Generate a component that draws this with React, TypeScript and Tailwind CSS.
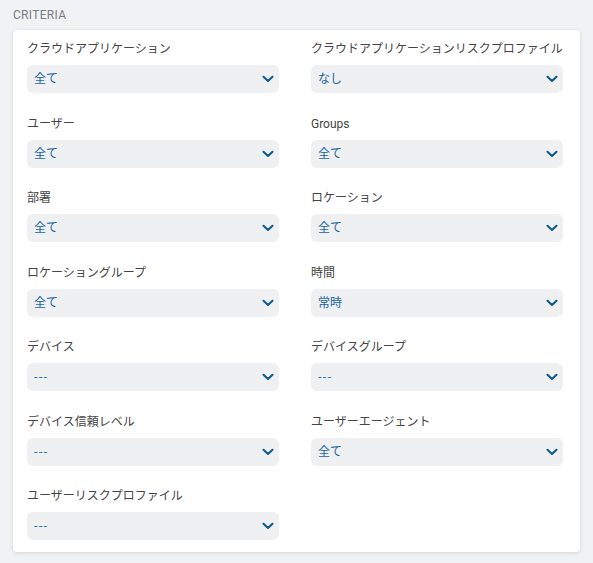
import { useState } from "react";

type Field = { label: string; value: string; empty?: boolean };

const fields: Field[] = [
	{ label: "クラウドアプリケーション", value: "全て" },
	{ label: "クラウドアプリケーションリスクプロファイル", value: "なし" },
	{ label: "ユーザー", value: "全て" },
	{ label: "Groups", value: "全て" },
	{ label: "部署", value: "全て" },
	{ label: "ロケーション", value: "全て" },
	{ label: "ロケーショングループ", value: "全て" },
	{ label: "時間", value: "常時" },
	{ label: "デバイス", value: "---", empty: true },
	{ label: "デバイスグループ", value: "---", empty: true },
	{ label: "デバイス信頼レベル", value: "---", empty: true },
	{ label: "ユーザーエージェント", value: "全て" },
	{ label: "ユーザーリスクプロファイル", value: "---", empty: true },
];

function Chevron() {
	return (
		<svg width="12" height="8" viewBox="0 0 12 8" fill="none" className="shrink-0">
			<path
				d="M1.5 1.8 L6 6 L10.5 1.8"
				stroke="#0e5a8a"
				strokeWidth="2.1"
				strokeLinecap="round"
				strokeLinejoin="round"
			/>
		</svg>
	);
}

function SelectField({ field }: { field: Field }) {
	const [open, setOpen] = useState(false);
	return (
		<div className="flex flex-col">
			<label className="h-5 text-[12px] leading-5 text-[#444]">{field.label}</label>
			<button
				type="button"
				onClick={() => setOpen(!open)}
				className="mt-[6px] flex h-7 w-full items-center justify-between rounded-md bg-[#eff0f2] pl-[7px] pr-[5px] text-left"
			>
				<span
					className={
						field.empty
							? "text-[13px] tracking-[1.2px] text-[#2a78b8]"
							: "text-[12px] text-[#19649c]"
					}
				>
					{field.value}
				</span>
				<Chevron />
			</button>
		</div>
	);
}

export default function App() {
	return (
		<div
			className="min-h-[563px] w-[593px] bg-[#f1f2f4] px-[13px] pt-2"
			style={{ fontFamily: "Roboto, 'Noto Sans CJK JP', sans-serif" }}
		>
			<h2 className="h-[22px] text-[12px] uppercase leading-[15px] tracking-[0.3px] text-[#7a7d82]">
				Criteria
			</h2>
			<div className="w-[567px] rounded bg-white pb-3 pl-[14px] pr-[17px] pt-[9px] shadow-[0_1px_4px_rgba(0,0,0,0.12)]">
				<div className="grid grid-cols-2 gap-x-8 gap-y-[20.5px]">
					{fields.map((f) => (
						<SelectField key={f.label} field={f} />
					))}
				</div>
			</div>
		</div>
	);
}
